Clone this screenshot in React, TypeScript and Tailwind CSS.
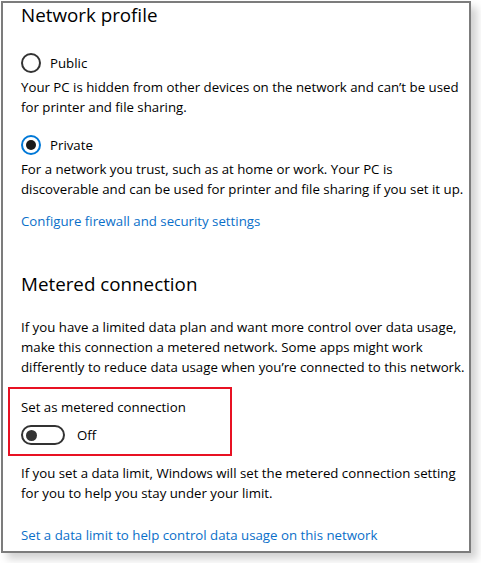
import React from "react";

const font = { fontFamily: '"Segoe UI", "Open Sans", "Noto Sans", sans-serif' };

export default function App() {
  return (
    <div className="w-[481px] h-[563px] bg-white relative overflow-hidden" style={font}>
      <div className="ml-[1px] mt-[1px] w-[470px] h-[552px] border-2 border-[#7c7c7c] bg-white shadow-[6px_6px_8px_rgba(0,0,0,0.18)] pl-[18px] text-black text-[13.25px] leading-[20px]">
        <div className="text-[18.8px] leading-[24px] h-[24px]">Network profile</div>

        <div className="mt-[26px] flex items-center h-[20px]">
          <span className="w-[20px] h-[20px] rounded-full border-2 border-[#333]" />
          <span className="ml-[9px]">Public</span>
        </div>
        <div className="mt-[4px] whitespace-nowrap">
          Your PC is hidden from other devices on the network and can’t be used
          <br />
          for printer and file sharing.
        </div>

        <div className="mt-[18px] flex items-center h-[20px]">
          <span className="w-[20px] h-[20px] rounded-full border-2 border-[#0078d7] flex items-center justify-center">
            <span className="w-[10px] h-[10px] rounded-full bg-[#1a1a1a]" />
          </span>
          <span className="ml-[9px]">Private</span>
        </div>
        <div className="mt-[4px] whitespace-nowrap">
          For a network you trust, such as at home or work. Your PC is
          <br />
          discoverable and can be used for printer and file sharing if you set it up.
        </div>

        <div className="mt-[12px] text-[#0a6fc9]">Configure firewall and security settings</div>

        <div className="mt-[39px] text-[18.8px] leading-[28px] h-[28px]">Metered connection</div>

        <div className="mt-[19px] whitespace-nowrap">
          If you have a limited data plan and want more control over data usage,
          <br />
          make this connection a metered network. Some apps might work
          <br />
          differently to reduce data usage when you’re connected to this network.
        </div>

        <div className="mt-[10px] -ml-[13px] w-[224px] h-[69px] border-2 border-[#e81123] pl-[11px] pt-[8px]">
          <div>Set as metered connection</div>
          <div className="mt-[8px] flex items-center h-[20px]">
            <span className="w-[44px] h-[20px] rounded-full border-2 border-[#333] flex items-center pl-[3px]">
              <span className="w-[11px] h-[11px] rounded-full bg-[#333]" />
            </span>
            <span className="ml-[12px]">Off</span>
          </div>
        </div>

        <div className="mt-[7px] whitespace-nowrap">
          If you set a data limit, Windows will set the metered connection setting
          <br />
          for you to help you stay under your limit.
        </div>

        <div className="mt-[22px] text-[#0a6fc9]">Set a data limit to help control data usage on this network</div>
      </div>
    </div>
  );
}
